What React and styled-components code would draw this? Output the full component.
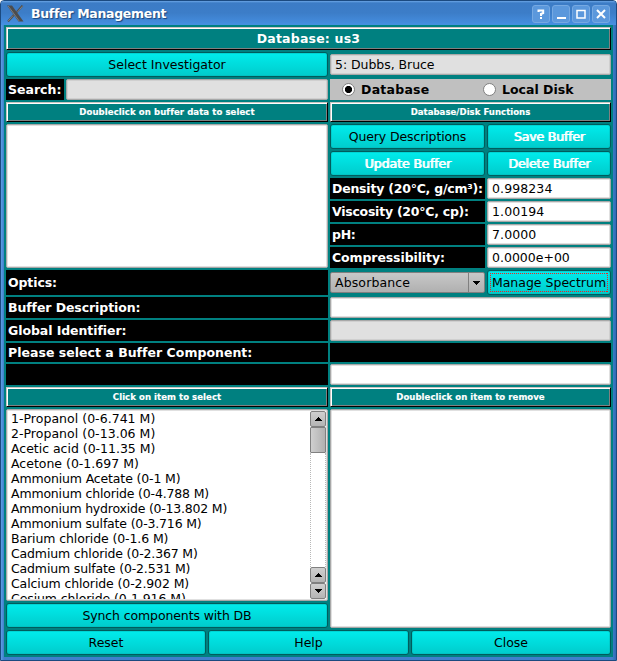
import React from "react";
import styled, { createGlobalStyle, css } from "styled-components";

const Global = createGlobalStyle`
  * { box-sizing: border-box; }
  body { margin: 0; background: #fff; font: 12.5px/15px "DejaVu Sans", sans-serif; color: #000; }
`;

const Window = styled.div`
  width: 617px;
  height: 661px;
  display: flex;
  flex-direction: column;
  overflow: hidden;
  border: 1px solid #1b4a80;
  border-radius: 4px 4px 0 0;
  background: linear-gradient(90deg, #5c9de4 0, #3f7fcb 3px, #3f7fcb calc(100% - 4px), #2f6ab4 100%);
  padding: 0 3px 3px;
`;

const TitleBar = styled.header`
  height: 24px;
  flex: none;
  margin: 0 -3px;
  padding: 0 6px;
  display: flex;
  align-items: center;
  background: linear-gradient(#6ba5e6 0, #3c7cc6 2px, #3c7dc8 50%, #4690e2 100%);
`;

const Title = styled.h1`
  flex: 1;
  margin: 1px 0 0 7px;
  font: bold 12.5px/16px "DejaVu Sans", sans-serif;
  letter-spacing: -0.3px;
  color: #fff;
  text-shadow: 1px 1px 1px #1b4378;
`;

const TitleButtons = styled.div`
  display: flex;
  gap: 2px;
  margin-top: 1px;
`;

const TitleButton = styled.button`
  width: 18px;
  height: 18px;
  padding: 0;
  display: grid;
  place-items: center;
  border: 1px solid #76a9e2;
  border-radius: 3px;
  background: #5b98dc;
  color: #fff;
`;

const Body = styled.main`
  flex: 1;
  display: flex;
  flex-direction: column;
  gap: 2px;
  padding: 2px;
  background: #008080;
`;

const Columns = styled.div`
  flex: none;
  display: grid;
  grid-template-columns: 322px 281px;
  gap: 2px;
  align-items: center;
`;

const Stack = styled.div`
  display: flex;
  flex-direction: column;
  gap: 2px;
`;

const Pair = styled.div`
  display: grid;
  grid-template-columns: 155px 124px;
  gap: 2px;
  align-items: center;
`;

const SearchRow = styled.div`
  display: grid;
  grid-template-columns: 58px 262px;
  gap: 2px;
`;

const Footer = styled.footer`
  display: grid;
  grid-template-columns: 200px 201px 200px;
  gap: 2px;
`;

const Banner = styled.h2`
  margin: 0;
  height: ${(p) => (p.$large ? 23 : 20)}px;
  display: flex;
  align-items: center;
  justify-content: center;
  color: #fff;
  background: #008080;
  border: 1px solid;
  border-color: #c8c4c0 #000 #000 #c8c4c0;
  box-shadow: inset 1px 1px #fff, inset -1px -1px #808080;
  font: bold ${(p) => (p.$large ? "12.5px/15px" : "9.5px/12px")} "DejaVu Sans${(p) => (p.$large ? "" : " Condensed")}", "DejaVu Sans", sans-serif;
  letter-spacing: ${(p) => p.$ls || 0}px;
  ${(p) => !p.$large && css`-webkit-text-stroke: 0.15px #fff;`}
`;

const focusDots = css`
  background:
    repeating-linear-gradient(90deg, #f02020 0 1px, transparent 1px 2px) 2px 2px / 118px 1px no-repeat,
    repeating-linear-gradient(90deg, #f02020 0 1px, transparent 1px 2px) 2px 20px / 118px 1px no-repeat,
    repeating-linear-gradient(#f02020 0 1px, transparent 1px 2px) 2px 2px / 1px 19px no-repeat,
    repeating-linear-gradient(#f02020 0 1px, transparent 1px 2px) 119px 2px / 1px 19px no-repeat,
    linear-gradient(#00ecec, #00cccc);
`;

const Button = styled.button`
  height: 25px;
  padding: 0;
  border: 1px solid #005c5c;
  border-radius: 3px;
  background: linear-gradient(#00ecec, #00cccc);
  box-shadow: inset 0 0 0 1px rgba(0, 180, 180, 0.4);
  font: 12.5px/15px "DejaVu Sans", sans-serif;
  letter-spacing: ${(p) => p.$ls || 0}px;
  color: #000;
  white-space: nowrap;
  ${(p) => p.$off && css`
    color: #fff;
    text-shadow: 1px 0 #fff;
  `}
  ${(p) => p.$focus && focusDots}
`;

const Caption = styled.div`
  height: ${(p) => p.$h || 21}px;
  padding-left: 2px;
  display: flex;
  align-items: center;
  background: #000;
  color: #fff;
  font-weight: bold;
  letter-spacing: ${(p) => p.$ls || 0}px;
  white-space: nowrap;
`;

const Field = styled.div`
  height: 21px;
  padding-left: 4px;
  display: flex;
  align-items: center;
  border: 1px solid #a8a8a8;
  border-radius: 2px;
  box-shadow: inset 0 0 0 1px ${(p) => (p.$readOnly ? "#cfcfcf" : "#e0e0e0")};
  background: ${(p) => (p.$readOnly ? "#e0e0e0" : "#fff")};
  letter-spacing: ${(p) => p.$ls || 0}px;
`;

const RadioRow = styled.div`
  height: 21px;
  display: grid;
  grid-template-columns: 141px 1fr;
  background: #c0c0c0;
  padding-left: 12px;
`;

const RadioLabel = styled.label`
  display: flex;
  align-items: center;
  gap: 6px;
  font-weight: bold;
  letter-spacing: ${(p) => p.$ls || 0}px;
`;

const Dot = styled.span`
  width: 13px;
  height: 13px;
  border: 1px solid #808080;
  border-radius: 50%;
  background: ${(p) => (p.$on ? "radial-gradient(circle, #000 3.2px, #fff 4px)" : "#fff")};
`;

const Combo = styled.div`
  height: 21px;
  display: grid;
  grid-template-columns: 1fr 16px;
  align-items: center;
  padding-left: 4px;
  border: 1px solid #808080;
  border-radius: 2px;
  background: linear-gradient(#c8c8c8, #b0b0b0);
  letter-spacing: 0.12px;
`;

const ComboArrow = styled.span`
  height: 19px;
  display: grid;
  place-items: center;
  border-left: 1px solid #808080;
`;

const ListBox = styled.div`
  height: ${(p) => p.$h}px;
  display: flex;
  overflow: hidden;
  border: 1px solid #a8a8a8;
  border-radius: 2px;
  box-shadow: inset 0 0 0 1px #e0e0e0;
  background: #fff;
  padding: 1px;
`;

const Items = styled.ul`
  flex: 1;
  margin: 0;
  padding: 0 0 0 3px;
  list-style: none;
  overflow: hidden;
`;

const Item = styled.li`
  height: 15px;
  letter-spacing: ${(p) => p.$ls || 0}px;
  white-space: nowrap;
`;

const ScrollBar = styled.div`
  width: 16px;
  display: flex;
  flex-direction: column;
`;

const ScrollButton = styled.span`
  height: 16px;
  display: grid;
  place-items: center;
  border: 1px solid #808080;
  border-radius: 2px;
  background: linear-gradient(#cfcfcf, #b4b4b4);
`;

const Thumb = styled.span`
  height: 26px;
  border: 1px solid #808080;
  border-radius: 1px;
  background: linear-gradient(90deg, #cfcfcf, #b0b0b0);
`;

const Track = styled.span`
  flex: 1;
  border: 1px dotted #b8b8b8;
  border-width: 0 1px;
`;

const Arrow = ({ down }) => (
  <svg width="7" height="4" viewBox="0 0 7 4" shapeRendering="crispEdges">
    <path d={down ? "M0 0h7v1H6v1H5v1H4v1H3V3H2V2H1V1H0z" : "M3 0h1v1h1v1h1v1h1v1H0V3h1V2h1V1h1z"} />
  </svg>
);

const Glyph = ({ children }) => (
  <svg width="12" height="12" viewBox="0 0 12 12" fill="none" stroke="#fff" strokeWidth="2">{children}</svg>
);

const components = [
  ["1-Propanol (0-6.741 M)", 0.03],
  ["2-Propanol (0-13.06 M)", 0.03],
  ["Acetic acid (0-11.35 M)", -0.02],
  ["Acetone (0-1.697 M)", 0],
  ["Ammonium Acetate (0-1 M)", -0.15],
  ["Ammonium chloride (0-4.788 M)", -0.17],
  ["Ammonium hydroxide (0-13.802 M)", -0.21],
  ["Ammonium sulfate (0-3.716 M)", -0.17],
  ["Barium chloride (0-1.6 M)", -0.1],
  ["Cadmium chloride (0-2.367 M)", -0.15],
  ["Cadmium sulfate (0-2.531 M)", -0.15],
  ["Calcium chloride (0-2.902 M)", -0.11],
  ["Cesium chloride (0-1.916 M)", -0.1],
];

const properties = [
  ["Density (20°C, g/cm³):", -0.22, "0.998234", 0.1],
  ["Viscosity (20°C, cp):", -0.25, "1.00194", 0.1],
  ["pH:", -0.3, "7.0000", 0.1],
  ["Compressibility:", -0.1, "0.0000e+00", 0],
];

export default function App() {
  return (
    <>
      <Global />
      <Window>
        <TitleBar>
          <svg width="17" height="17" viewBox="0 0 17 17">
            <path d="M0 .5h5L16.5 16.5h-5z" fill="#4c4c4c" />
            <path d="M15.5.5L9.8 7.2M6.8 10L1 16.5" stroke="#505050" strokeWidth="2" />
            <path d="M1.2 1l11 15M15.5 1.2L10.5 7M6 10.5L1.2 16" stroke="#8c8c8c" strokeWidth=".8" />
          </svg>
          <Title>Buffer Management</Title>
          <TitleButtons>
            <TitleButton><Glyph><path d="M3.5 4V2.5h4.7V5L6 6v2M6 9v2" /></Glyph></TitleButton>
            <TitleButton><Glyph><path d="M2 10h9" /></Glyph></TitleButton>
            <TitleButton><Glyph><path d="M2 2.5h8v7.5H2z" strokeWidth="1.5" /></Glyph></TitleButton>
            <TitleButton><Glyph><path d="M2 2l8 8M10 2L2 10" /></Glyph></TitleButton>
          </TitleButtons>
        </TitleBar>
        <Body>
          <Banner $large $ls={0.2}>Database: us3</Banner>
          <Columns>
            <Button>Select Investigator</Button>
            <Field $readOnly $ls={-0.05}>5: Dubbs, Bruce</Field>
          </Columns>
          <Columns>
            <SearchRow><Caption $ls={0}>Search:</Caption><Field $readOnly /></SearchRow>
            <RadioRow>
              <RadioLabel $ls={0.25}><Dot $on />Database</RadioLabel>
              <RadioLabel><Dot />Local Disk</RadioLabel>
            </RadioRow>
          </Columns>
          <Columns>
            <Banner $ls={0.08}>Doubleclick on buffer data to select</Banner>
            <Banner $ls={0.03}>Database/Disk Functions</Banner>
          </Columns>
          <Columns>
            <ListBox $h={144} />
            <Stack>
              <Pair><Button $ls={-0.12}>Query Descriptions</Button><Button $off $ls={-0.15}>Save Buffer</Button></Pair>
              <Pair><Button $off $ls={-0.07}>Update Buffer</Button><Button $off $ls={-0.08}>Delete Buffer</Button></Pair>
              {properties.map(([name, nameLs, value, valueLs]) => (
                <Pair key={name}><Caption $ls={nameLs}>{name}</Caption><Field $ls={valueLs}>{value}</Field></Pair>
              ))}
            </Stack>
          </Columns>
          <Columns>
            <Caption $h={25} $ls={-0.1}>Optics:</Caption>
            <Pair>
              <Combo>Absorbance<ComboArrow><Arrow down /></ComboArrow></Combo>
              <Button $focus>Manage Spectrum</Button>
            </Pair>
          </Columns>
          <Columns><Caption $ls={-0.09}>Buffer Description:</Caption><Field /></Columns>
          <Columns><Caption $ls={-0.07}>Global Identifier:</Caption><Field $readOnly /></Columns>
          <Columns><Caption $h={19} $ls={0.02}>Please select a Buffer Component:</Caption><Caption $h={19} /></Columns>
          <Columns><Caption /><Field /></Columns>
          <Columns>
            <Banner $ls={0.05}>Click on item to select</Banner>
            <Banner $ls={0.04}>Doubleclick on item to remove</Banner>
          </Columns>
          <Columns>
            <Stack>
              <ListBox $h={192}>
                <Items>{components.map(([name, ls]) => <Item key={name} $ls={ls}>{name}</Item>)}</Items>
                <ScrollBar>
                  <ScrollButton><Arrow /></ScrollButton>
                  <Thumb />
                  <Track />
                  <ScrollButton><Arrow /></ScrollButton>
                  <ScrollButton><Arrow down /></ScrollButton>
                </ScrollBar>
              </ListBox>
              <Button $ls={-0.12}>Synch components with DB</Button>
            </Stack>
            <ListBox $h={219} />
          </Columns>
          <Footer><Button>Reset</Button><Button>Help</Button><Button>Close</Button></Footer>
        </Body>
      </Window>
    </>
  );
}
